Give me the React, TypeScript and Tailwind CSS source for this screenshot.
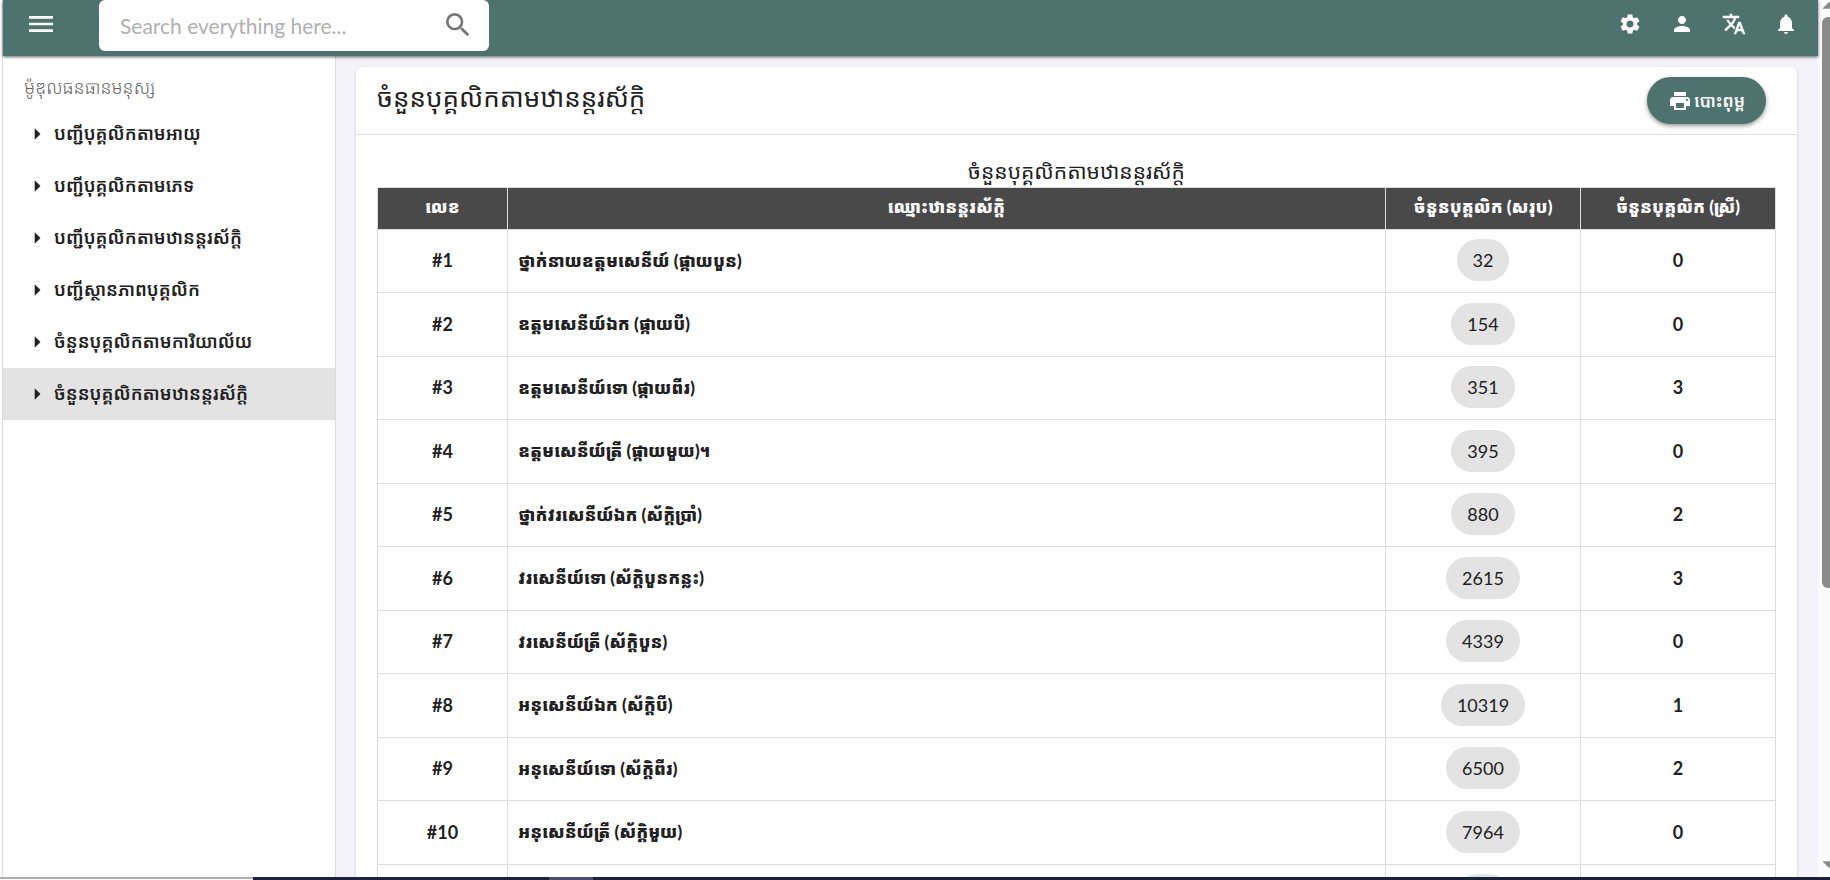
import React from "react";
import {
  MdArrowDropDown,
  MdArrowDropUp,
  MdArrowRight,
  MdMenu,
  MdNotifications,
  MdPerson,
  MdPrint,
  MdSearch,
  MdSettings,
} from "react-icons/md";

const menuItems = [
  "បញ្ជីបុគ្គលិកតាមអាយុ",
  "បញ្ជីបុគ្គលិកតាមភេទ",
  "បញ្ជីបុគ្គលិកតាមឋានន្តរស័ក្តិ",
  "បញ្ជីស្ថានភាពបុគ្គលិក",
  "ចំនួនបុគ្គលិកតាមការិយាល័យ",
  "ចំនួនបុគ្គលិកតាមឋានន្តរស័ក្តិ",
];

const activeItem = 5;

const ranks = [
  { name: "ថ្នាក់នាយឧត្តមសេនីយ៍ (ផ្កាយបួន)", total: 32, female: 0 },
  { name: "ឧត្តមសេនីយ៍ឯក (ផ្កាយបី)", total: 154, female: 0 },
  { name: "ឧត្តមសេនីយ៍ទោ (ផ្កាយពីរ)", total: 351, female: 3 },
  { name: "ឧត្តមសេនីយ៍ត្រី (ផ្កាយមួយ)។", total: 395, female: 0 },
  { name: "ថ្នាក់វរសេនីយ៍ឯក (ស័ក្តិប្រាំ)", total: 880, female: 2 },
  { name: "វរសេនីយ៍ទោ (ស័ក្តិបួនកន្លះ)", total: 2615, female: 3 },
  { name: "វរសេនីយ៍ត្រី (ស័ក្តិបួន)", total: 4339, female: 0 },
  { name: "អនុសេនីយ៍ឯក (ស័ក្តិបី)", total: 10319, female: 1 },
  { name: "អនុសេនីយ៍ទោ (ស័ក្តិពីរ)", total: 6500, female: 2 },
  { name: "អនុសេនីយ៍ត្រី (ស័ក្តិមួយ)", total: 7964, female: 0 },
];

function TranslateIcon({ className }: { className?: string }) {
  return (
    <svg
      viewBox="0 0 24 24"
      fill="currentColor"
      stroke="currentColor"
      strokeWidth="0.5"
      className={className}
    >
      <path d="M12.87 15.07l-2.54-2.51.03-.03c1.74-1.94 2.98-4.17 3.71-6.53H17V4h-7V2H8v2H1v1.99h11.17C11.5 7.92 10.44 9.75 9 11.35 8.07 10.32 7.3 9.19 6.69 8h-2c.73 1.63 1.73 3.17 2.98 4.56l-5.09 5.02L4 19l5-5 3.11 3.11.76-2.04zM18.5 10h-2L12 22h2l1.12-3h4.75L21 22h2l-4.5-12zm-2.62 7l1.62-4.33L19.12 17h-3.24z" />
    </svg>
  );
}

const actions = [
  { label: "Settings", icon: MdSettings },
  { label: "Account", icon: MdPerson },
  { label: "Language", icon: TranslateIcon },
  { label: "Notifications", icon: MdNotifications },
];

function Header() {
  return (
    <header className="z-10 flex h-14 shrink-0 items-start justify-between bg-[#4e726d] pr-5 pl-[22px] shadow-[0_1px_3px_rgba(0,0,0,0.6)]">
      <div className="flex items-start">
        <button aria-label="Menu" className="mt-2 mr-[42px] text-white">
          <MdMenu className="h-8 w-8" />
        </button>
        <div className="flex h-[51px] w-[390px] items-center rounded-md bg-white pr-[15px] pb-0.5 pl-[21px]">
          <input
            type="text"
            aria-label="Search"
            placeholder="Search everything here..."
            className="min-w-0 flex-1 pt-0.5 text-[21px] text-[#212121] outline-none placeholder:text-[#b0b0b0]"
          />
          <button aria-label="Submit search" className="text-[#757575]">
            <MdSearch className="h-8 w-8" />
          </button>
        </div>
      </div>
      <div className="mt-3 flex gap-7 text-white">
        {actions.map(({ label, icon: Icon }) => (
          <button key={label} aria-label={label}>
            <Icon className="h-6 w-6" />
          </button>
        ))}
      </div>
    </header>
  );
}

function Sidebar() {
  return (
    <nav className="w-[333px] shrink-0 border-r border-[#dcdcdc] bg-white">
      <p className="flex h-[52px] items-center px-[21px] pt-2.5 text-lg font-light text-[#666666]">
        ម៉ូឌុលធនធានមនុស្ស
      </p>
      <ul>
        {menuItems.map((item, i) => (
          <li key={item}>
            <a
              href="#"
              className={
                i === activeItem
                  ? "flex h-[52px] items-center bg-[#e3e3e3] pl-5 text-lg font-semibold text-[#212121]"
                  : "flex h-[52px] items-center pl-5 text-lg font-semibold text-[#212121]"
              }
            >
              <MdArrowRight className="mr-[3px] h-7 w-7" />
              <span className="pb-0.5">{item}</span>
            </a>
          </li>
        ))}
      </ul>
    </nav>
  );
}

function RankTable() {
  return (
    <table className="w-full table-fixed border-collapse text-lg text-[#212121]">
      <caption className="h-[52px] pt-5 text-[21px] leading-8">
        ចំនួនបុគ្គលិកតាមឋានន្តរស័ក្តិ
      </caption>
      <colgroup>
        <col className="w-[130px]" />
        <col />
        <col className="w-[195px]" />
        <col className="w-[195px]" />
      </colgroup>
      <thead>
        <tr className="h-[42px] bg-[#494949] text-[17px] text-white">
          <th className="border border-[#dcdcdc] pb-0.5 font-black">លេខ</th>
          <th className="border border-[#dcdcdc] pb-0.5 font-black">
            ឈ្មោះឋានន្តរស័ក្តិ
          </th>
          <th className="border border-[#dcdcdc] pb-0.5 font-black">
            ចំនួនបុគ្គលិក (សរុប)
          </th>
          <th className="border border-[#dcdcdc] pb-0.5 font-black">
            ចំនួនបុគ្គលិក (ស្រី)
          </th>
        </tr>
      </thead>
      <tbody>
        {ranks.map((rank, i) => (
          <tr key={rank.name} className="h-[63px] even:h-16">
            <td className="border border-[#dcdcdc] pb-0.5 text-center font-bold">
              #{i + 1}
            </td>
            <td className="border border-[#dcdcdc] px-2.5 text-[17px] font-black">
              {rank.name}
            </td>
            <td className="border border-[#dcdcdc] pb-0.5">
              <span className="mx-auto flex h-[42px] w-fit items-center rounded-full bg-[#e3e3e3] px-4">
                {rank.total}
              </span>
            </td>
            <td className="border border-[#dcdcdc] pb-0.5 text-center font-bold">
              {rank.female}
            </td>
          </tr>
        ))}
        <tr className="h-[63px]">
          <td className="border border-[#dcdcdc]" />
          <td className="border border-[#dcdcdc]" />
          <td className="border border-[#dcdcdc] pb-0.5">
            <span className="mx-auto block h-[42px] w-[54px] rounded-full bg-[#e3e3e3]" />
          </td>
          <td className="border border-[#dcdcdc]" />
        </tr>
      </tbody>
    </table>
  );
}

export default function App() {
  return (
    <div className="flex h-screen flex-col overflow-hidden bg-white font-['Lato','Noto_Sans_Khmer','Noto_Sans',sans-serif]">
      <div className="flex min-h-0 flex-1">
        <div className="ml-0.5 flex min-w-0 flex-1 flex-col border-l border-[#dcdcdc]">
          <Header />
          <div className="flex min-h-0 flex-1">
            <Sidebar />
            <main className="min-w-0 flex-1 overflow-hidden bg-[#f4f3f9] pt-[11px] pr-[21px] pl-5">
              <div className="rounded-md bg-white shadow-[0_1px_3px_rgba(0,0,0,0.2)]">
                {/* Card title */}
                <div className="flex h-[68px] items-center justify-between border-b border-[#e0e0e0] pr-[31px] pl-[21px]">
                  <h1 className="pb-1.5 text-[26px] text-[#212121]">
                    ចំនួនបុគ្គលិកតាមឋានន្តរស័ក្តិ
                  </h1>
                  <button className="flex h-[47px] items-center gap-0.5 rounded-full bg-[#4e726d] px-[21px] text-[17px] font-semibold text-white shadow-[0_2px_4px_rgba(0,0,0,0.4)]">
                    <MdPrint className="h-6 w-6" />
                    បោះពុម្ព
                  </button>
                </div>
                <div className="px-[21px] pb-5">
                  <RankTable />
                </div>
              </div>
            </main>
          </div>
        </div>

        {/* Scroll track */}
        <div className="flex w-3 shrink-0 flex-col overflow-hidden bg-[#fbfbfb] pl-1 text-[#8b8b8b]">
          <MdArrowDropUp className="-mt-2.5 -mb-[5px] -ml-[9px] h-8 w-8 shrink-0" />
          <div className="h-[571px] w-3 shrink-0 rounded-md bg-[#8b8b8b]" />
          <MdArrowDropDown className="mt-auto -mb-[3px] -ml-[9px] h-8 w-8 shrink-0" />
        </div>
      </div>

      {/* Bottom edge */}
      <div className="flex h-[3px] shrink-0">
        <div className="w-[253px] border-t-2 border-[#b0b0b0] bg-white" />
        <div className="w-[296px] bg-[#1a2340]" />
        <div className="w-11 bg-[#464e6e]" />
        <div className="flex-1 bg-[#1a1f3a]" />
      </div>
    </div>
  );
}
